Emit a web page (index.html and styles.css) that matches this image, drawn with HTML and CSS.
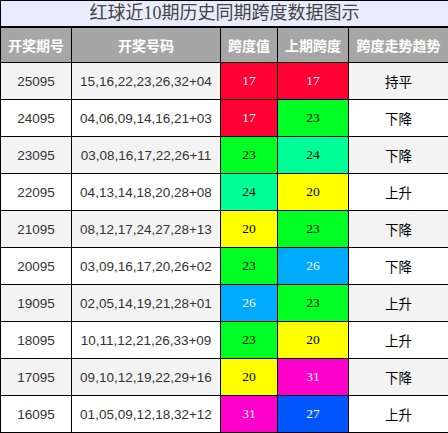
FILE: index.html
```html
<!DOCTYPE html>
<html lang="zh">
<head>
    <meta charset="UTF-8">
    <title>红球近10期历史同期跨度数据图示</title>
    <link rel="stylesheet" href="styles.css">
</head>
<body>
<table class="kd">
    <colgroup>
        <col class="c1"><col class="c2"><col class="c3"><col class="c4"><col class="c5">
    </colgroup>
    <tr class="title"><td colspan="5">红球近10期历史同期跨度数据图示</td></tr>
    <tr class="head">
        <th>开奖期号</th><th>开奖号码</th><th>跨度值</th><th>上期跨度</th><th>跨度走势趋势</th>
    </tr>
    <tr class="odd"><td>25095</td><td>15,16,22,23,26,32+04</td><td class="num red">17</td><td class="num red">17</td><td class="qs">持平</td></tr>
    <tr><td>24095</td><td>04,06,09,14,16,21+03</td><td class="num red">17</td><td class="num green">23</td><td class="qs">下降</td></tr>
    <tr class="odd"><td>23095</td><td>03,08,16,17,22,26+11</td><td class="num green">23</td><td class="num teal">24</td><td class="qs">下降</td></tr>
    <tr><td>22095</td><td>04,13,14,18,20,28+08</td><td class="num teal">24</td><td class="num yellow">20</td><td class="qs">上升</td></tr>
    <tr class="odd"><td>21095</td><td>08,12,17,24,27,28+13</td><td class="num yellow">20</td><td class="num green">23</td><td class="qs">下降</td></tr>
    <tr><td>20095</td><td>03,09,16,17,20,26+02</td><td class="num green">23</td><td class="num sky">26</td><td class="qs">下降</td></tr>
    <tr class="odd"><td>19095</td><td>02,05,14,19,21,28+01</td><td class="num sky">26</td><td class="num green">23</td><td class="qs">上升</td></tr>
    <tr><td>18095</td><td>10,11,12,21,26,33+09</td><td class="num green">23</td><td class="num yellow">20</td><td class="qs">上升</td></tr>
    <tr class="odd"><td>17095</td><td>09,10,12,19,22,29+16</td><td class="num yellow">20</td><td class="num pink">31</td><td class="qs">下降</td></tr>
    <tr><td>16095</td><td>01,05,09,12,18,32+12</td><td class="num pink">31</td><td class="num blue">27</td><td class="qs">上升</td></tr>
</table>
</body>
</html>
```
FILE: styles.css
```css
body{
    margin:0;
    font-family:"Liberation Sans","Noto Sans CJK SC",sans-serif;
}
.kd{
    width:448px;
    border-collapse:collapse;
    table-layout:fixed;
    text-align:center;
    color:#333;
}
.c1{width:71px;}
.c2{width:149px;}
.c3{width:57px;}
.c4{width:71px;}
.c5{width:100px;}
.kd td,.kd th{
    border:1px solid #000;
    padding:0;
}
.title td{
    height:25px;
    background:#e9ecfd;
    color:#444;
    font-size:18px;
    font-family:"Liberation Serif","Noto Sans CJK SC",serif;
    border-bottom:2px solid #000;
    line-height:25px;
}
.head th{
    height:34px;
    background:#a6a6a6;
    color:#fff;
    font-size:14px;
    font-weight:bold;
}
.kd tr:not(.title):not(.head) td{
    height:36px;
    font-size:13.5px;
}
.odd{background:#f3f3f3;}
.kd td.num{
    font-family:"Liberation Serif",serif;
    font-size:16px;
    color:#000;
}
.kd td.qs{font-size:16px;color:#000;}
.red{background:#ff0033;}
.kd td.red,.kd td.sky,.kd td.pink,.kd td.blue{color:#fff;}
.green{background:#00ff22;}
.teal{background:#00ff99;}
.yellow{background:#ffff00;}
.sky{background:#00aaff;}
.pink{background:#ff00cc;}
.blue{background:#0055ff;}
```
